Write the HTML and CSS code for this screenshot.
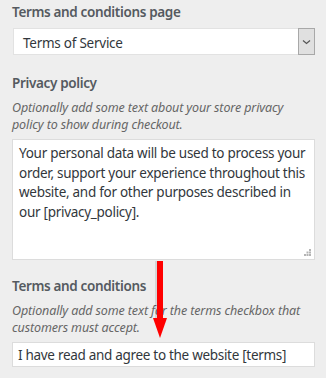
FILE: index.html
```html
<!DOCTYPE html>
<html>
<head>
<meta charset="utf-8">
<link rel="stylesheet" href="styles.css">
</head>
<body>
<div class="panel">
  <div class="field field-first">
    <div class="label">Terms and conditions page</div>
    <div class="select">
      <span class="select-text">Terms of Service</span>
      <span class="select-btn">
        <svg width="9" height="6" viewBox="0 0 9 6"><path d="M1 1.5 L4.5 4.5 L8 1.5" fill="none" stroke="#555" stroke-width="1.2"/></svg>
      </span>
    </div>
  </div>
  <div class="field field-second">
    <div class="label">Privacy policy</div>
    <div class="desc">Optionally add some text about your store privacy policy to show during checkout.</div>
    <div class="textarea">Your personal data will be used to process your order, support your experience throughout this website, and for other purposes described in our [privacy_policy].
      <svg class="grip" width="7" height="7" viewBox="0 0 7 7"><rect x="5" y="0" width="2" height="2" fill="#b4b4b4"/><rect x="2.5" y="2.5" width="2" height="2" fill="#b4b4b4"/><rect x="5" y="2.5" width="2" height="2" fill="#b4b4b4"/><rect x="0" y="5" width="2" height="2" fill="#b4b4b4"/><rect x="2.5" y="5" width="2" height="2" fill="#b4b4b4"/><rect x="5" y="5" width="2" height="2" fill="#b4b4b4"/></svg>
    </div>
  </div>
  <div class="field field-third">
    <div class="label">Terms and conditions</div>
    <div class="desc">Optionally add some text for the terms checkbox that customers must accept.</div>
    <div class="input">I have read and agree to the website [terms]</div>
  </div>
</div>
<svg class="arrow" width="20" height="80" viewBox="0 0 20 80">
  <rect x="4" y="0" width="6" height="58" fill="rgba(0,0,0,0.1)"/>
  <rect x="6" y="0" width="6" height="58" fill="#f00"/>
  <path d="M2 57 L16 57 L9 77 Z" fill="#f00"/>
</svg>
</body>
</html>
```
FILE: styles.css
```css
html, body {
  margin: 0;
  padding: 0;
}
body {
  background: #eeeeee;
  width: 326px;
  height: 378px;
  overflow: hidden;
  position: relative;
  font-family: "Noto Sans", "Open Sans", sans-serif;
}
.panel {
  padding: 2px 11px 0 12px;
}
.field-first {
  margin-bottom: 18px;
}
.field-second {
  margin-bottom: 16px;
}
.label {
  font-size: 13.5px;
  font-weight: 600;
  letter-spacing: -0.35px;
  color: #555a60;
  line-height: 20px;
}
.field-first .label {
  margin-bottom: 6px;
}
.select {
  display: flex;
  height: 27px;
  background: #fff;
  border: 1px solid #e2e2e2;
  box-sizing: border-box;
  margin-left: 1px;
}
.select-text {
  flex: 1;
  font-size: 13.5px;
  letter-spacing: -0.25px;
  color: #32373c;
  padding: 3px 0 0 9px;
  line-height: 23px;
}
.select-btn {
  width: 15px;
  background: #e0e0e0;
  border: 1px solid #a8a8a8;
  margin: -1px;
  display: flex;
  align-items: center;
  justify-content: center;
}
.desc {
  font-size: 12.5px;
  font-style: italic;
  letter-spacing: -0.12px;
  color: #666;
  line-height: 17px;
  margin-top: 6px;
  margin-bottom: 6px;
}
.textarea {
  position: relative;
  height: 121px;
  box-sizing: border-box;
  background: #fff;
  border: 1px solid #dcdcdc;
  padding: 4px 2px 0 6px;
  font-size: 13.5px;
  letter-spacing: -0.28px;
  color: #32373c;
  line-height: 19.5px;
}
.grip {
  position: absolute;
  right: 3px;
  bottom: 3px;
}
.input {
  height: 25px;
  box-sizing: border-box;
  background: #fff;
  border: 1px solid #dcdcdc;
  padding: 2px 5px 0 5px;
  font-size: 13.5px;
  letter-spacing: -0.3px;
  color: #32373c;
  line-height: 21px;
  white-space: nowrap;
}
.arrow {
  position: absolute;
  left: 151px;
  top: 261px;
}
```
